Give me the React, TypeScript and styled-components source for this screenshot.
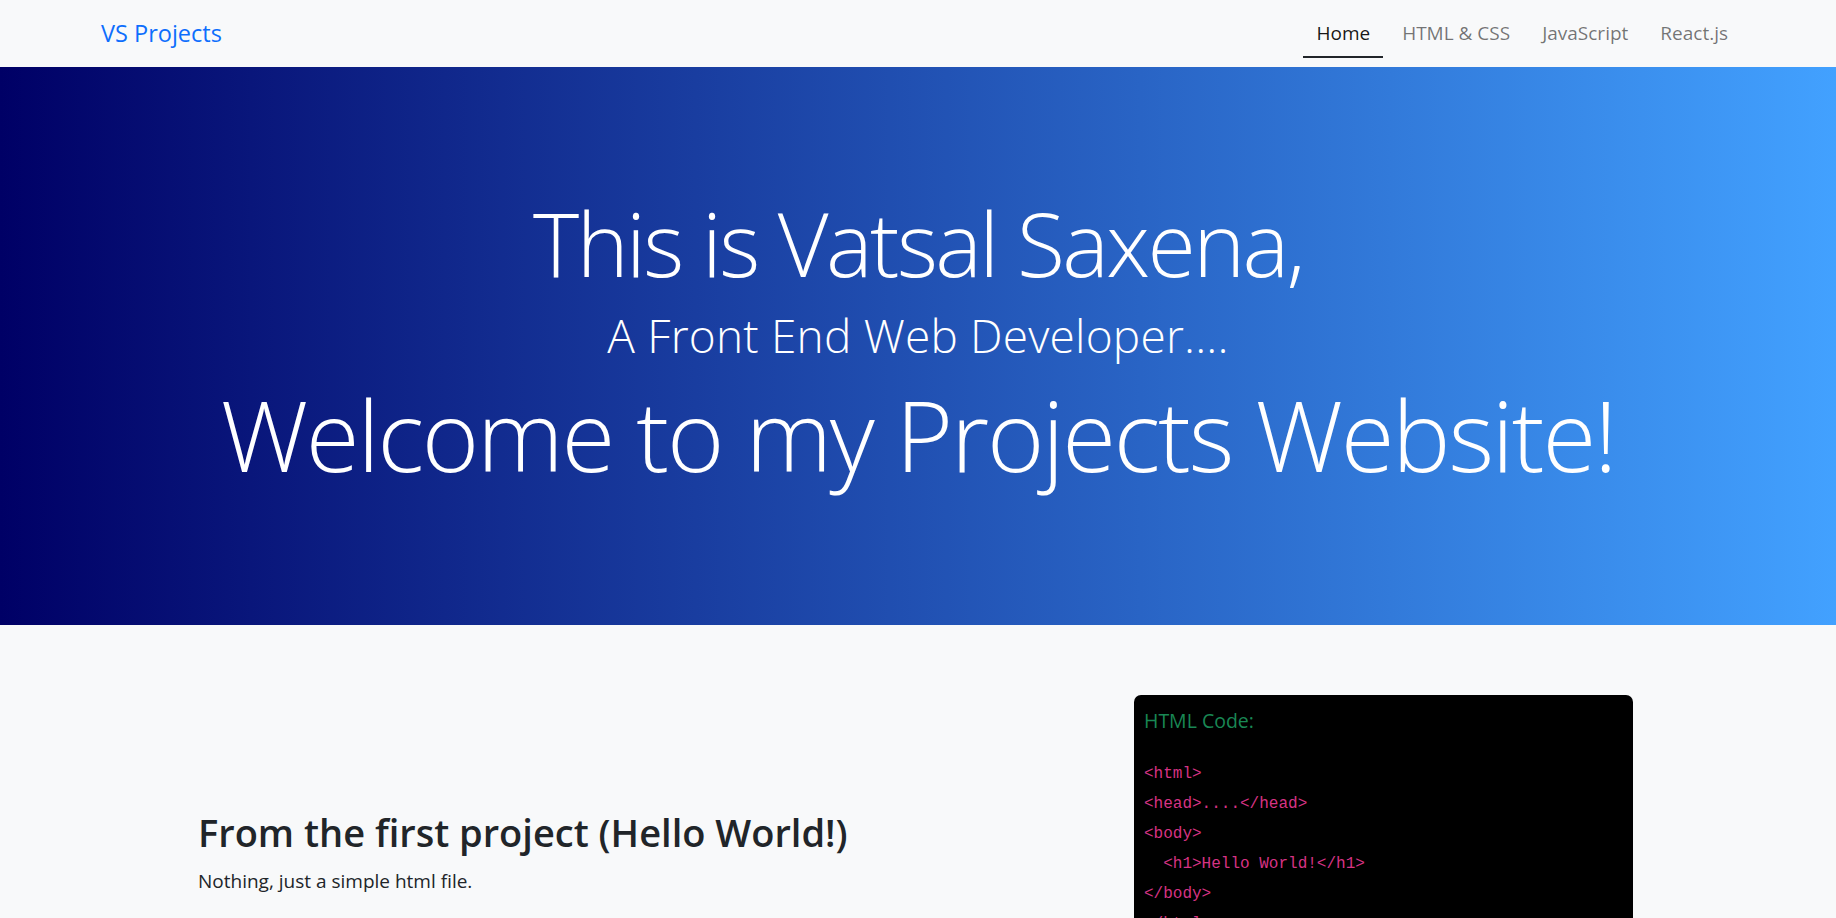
import React from "react";
import styled, { createGlobalStyle } from "styled-components";

const GlobalStyle = createGlobalStyle`
  html, body { margin: 0; padding: 0; }
  body {
    background: #f8f9fa;
    font-family: "Open Sans", "Noto Sans", sans-serif;
    color: #212529;
  }
  * { box-sizing: border-box; }
`;

const Navbar = styled.nav`
  height: 67px;
  display: flex;
  align-items: flex-start;
  justify-content: space-between;
  padding: 0 95px 0 101px;
  background: #f8f9fa;
`;

const Brand = styled.a`
  padding-top: 18px;
  font-size: 23.5px;
  line-height: 30px;
  color: #0d6efd;
  text-decoration: none;
`;

const NavList = styled.ul`
  display: flex;
  gap: 6px;
  margin: 0;
  padding: 0;
  list-style: none;
`;

const NavLink = styled.a<{ $active?: boolean }>`
  display: block;
  padding: 19px 13px 9px;
  font-size: 19px;
  line-height: 28px;
  text-decoration: none;
  color: ${(p) => (p.$active ? "rgba(0,0,0,0.92)" : "rgba(0,0,0,0.55)")};
  border-bottom: 2px solid ${(p) => (p.$active ? "#212529" : "transparent")};
`;

const Hero = styled.header`
  height: 558px;
  padding-top: 123px;
  background: linear-gradient(to right, #000066, #42a1ff);
  color: #fff;
  display: flex;
  flex-direction: column;
  align-items: center;
  text-align: center;
`;

const HeroLine = styled.h1<{ $size: number; $gap: number; $track: number }>`
  margin: ${(p) => p.$gap}px 0 0;
  font-weight: 300;
  font-size: ${(p) => p.$size}px;
  letter-spacing: ${(p) => p.$track}px;
  line-height: 1.2;
  white-space: nowrap;
`;

const Section = styled.section`
  display: grid;
  grid-template-columns: 1fr 499px;
  padding: 70px 203px 0 198px;
  align-items: start;
`;

const Intro = styled.div`
  padding-top: 115px;
`;

const Title = styled.h2`
  margin: 0;
  font-size: 38px;
  font-weight: 600;
  line-height: 1.2;
  color: #212529;
`;

const Text = styled.p`
  margin: 11px 0 0;
  font-size: 19px;
  line-height: 1.5;
  color: #212529;
`;

const CodeCard = styled.div`
  background: #000;
  border-radius: 7px;
  padding: 11px 10px 24px;
`;

const CodeLabel = styled.div`
  font-size: 19.5px;
  line-height: 1.5;
  color: #198754;
`;

const Code = styled.pre`
  margin: 24px 0 0;
  font-family: "Liberation Mono", "DejaVu Sans Mono", monospace;
  font-size: 16px;
  line-height: 30px;
  color: #d63384;
  white-space: pre;
`;

const codeLines = [
  "<html>",
  "<head>....</head>",
  "<body>",
  "  <h1>Hello World!</h1>",
  "</body>",
  "</html>",
];

export default function App() {
  return (
    <>
      <GlobalStyle />
      <Navbar>
        <Brand href="#">VS Projects</Brand>
        <NavList>
          <li><NavLink $active href="#">Home</NavLink></li>
          <li><NavLink href="#">HTML &amp; CSS</NavLink></li>
          <li><NavLink href="#">JavaScript</NavLink></li>
          <li><NavLink href="#">React.js</NavLink></li>
        </NavList>
      </Navbar>
      <Hero>
        <HeroLine $size={88} $gap={1} $track={-2.6}>This is Vatsal Saxena,</HeroLine>
        <HeroLine as="h2" $size={46} $gap={11.5} $track={0.2}>A Front End Web Developer....</HeroLine>
        <HeroLine $size={98} $gap={13} $track={-2.2}>Welcome to my Projects Website!</HeroLine>
      </Hero>
      <Section>
        <Intro>
          <Title>From the first project (Hello World!)</Title>
          <Text>Nothing, just a simple html file.</Text>
        </Intro>
        <CodeCard>
          <CodeLabel>HTML Code:</CodeLabel>
          <Code>{codeLines.join("\n")}</Code>
        </CodeCard>
      </Section>
    </>
  );
}
